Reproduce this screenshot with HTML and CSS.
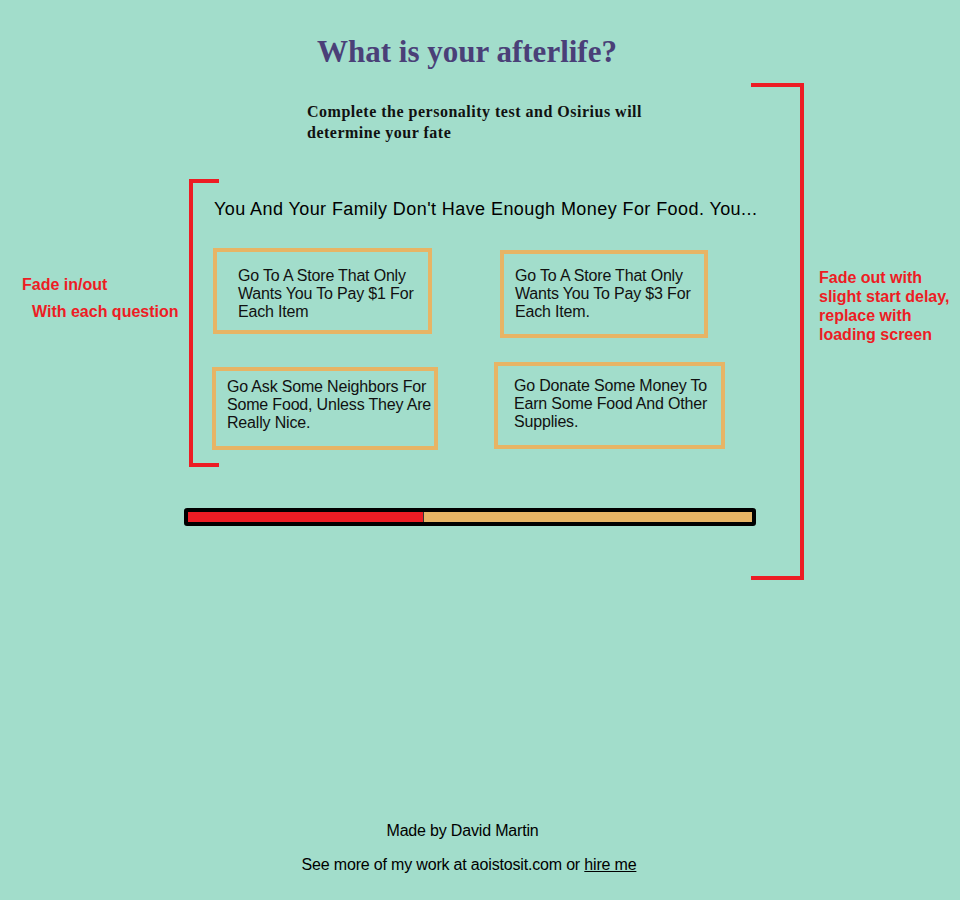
FILE: index.html
```html
<!DOCTYPE html>
<html lang="en">
<head>
<meta charset="utf-8">
<title>What is your afterlife?</title>
<link rel="stylesheet" href="styles.css">
</head>
<body>
<div class="page">
  <h1 class="title">What is your afterlife?</h1>
  <p class="subtitle">Complete the personality test and Osirius will determine your fate</p>

  <section class="quiz">
    <h2 class="question">You And Your Family Don't Have Enough Money For Food. You...</h2>
    <div class="answers">
      <div class="answer answer-1">Go To A Store That Only<br>Wants You To Pay $1 For<br>Each Item</div>
      <div class="answer answer-2">Go To A Store That Only<br>Wants You To Pay $3 For<br>Each Item.</div>
      <div class="answer answer-3">Go Ask Some Neighbors For<br>Some Food, Unless They Are<br>Really Nice.</div>
      <div class="answer answer-4">Go Donate Some Money To<br>Earn Some Food And Other<br>Supplies.</div>
    </div>
  </section>

  <div class="progress">
    <div class="progress-track">
      <div class="progress-fill" style="width: 41.7%"></div>
    </div>
  </div>

  <footer class="footer">
    <p class="credit">Made by David Martin</p>
    <p class="more">See more of my work at aoistosit.com or <a href="#" class="hire">hire me</a></p>
  </footer>

  <div class="bracket bracket-left"></div>
  <div class="bracket bracket-right"></div>
  <div class="note note-left">
    <span class="note-line">Fade in/out</span>
    <span class="note-line note-indent">With each question</span>
  </div>
  <div class="note note-right">Fade out with slight start delay, replace with loading screen</div>
</div>
</body>
</html>
```
FILE: styles.css
```css
html, body {
  margin: 0;
  padding: 0;
  background: #a2ddcb;
}

.page {
  position: relative;
  width: 960px;
  height: 900px;
  padding-top: 34px;
  box-sizing: border-box;
  font-family: "Liberation Sans", Arial, sans-serif;
  color: #000;
}

.title {
  margin: 0;
  width: 934px;
  text-align: center;
  font-family: "Liberation Serif", "Times New Roman", serif;
  font-weight: bold;
  font-size: 31px;
  line-height: 36px;
  color: #4a4078;
}

.subtitle {
  margin: 31px 0 0 307px;
  width: 360px;
  font-family: "Liberation Serif", "Times New Roman", serif;
  font-weight: bold;
  font-size: 16px;
  letter-spacing: 0.5px;
  line-height: 21px;
  color: #111;
}

.quiz {
  margin: 55px 0 0 212px;
}

.question {
  margin: 0 0 0 2px;
  font-weight: normal;
  font-size: 18px;
  letter-spacing: 0.42px;
  line-height: 22px;
  white-space: nowrap;
}

.answers {
  margin-top: 28px;
  display: grid;
  grid-template-columns: 282px 240px;
  row-gap: 24px;
  align-items: start;
}

.answer {
  box-sizing: border-box;
  border: 4px solid #e7b465;
  font-size: 16px;
  letter-spacing: -0.18px;
  line-height: 18px;
  white-space: nowrap;
  color: #111;
}

.answer-1 {
  margin-left: 1px;
  width: 219px;
  height: 86px;
  padding: 15px 0 0 21px;
}

.answer-2 {
  margin: 2px 0 0 6px;
  width: 208px;
  height: 88px;
  padding: 13px 0 0 11px;
}

.answer-3 {
  margin-top: 5px;
  width: 226px;
  height: 83px;
  padding: 7px 0 0 11px;
}

.answer-4 {
  width: 231px;
  height: 87px;
  padding: 11px 0 0 16px;
}

.progress {
  margin: 58px 0 0 184px;
  width: 572px;
}

.progress-track {
  background: #e7b465;
  border: 4px solid #000;
  border-radius: 3px;
  height: 10px;
}

.progress-fill {
  height: 100%;
  background: #ed1c24;
  border-right: 1px solid #333;
}

.footer {
  margin-top: 296px;
  width: 932px;
  text-align: center;
  font-size: 16px;
  letter-spacing: -0.18px;
  line-height: 18px;
}

.footer p {
  margin: 0;
}

.credit {
  padding-right: 7px;
}

.more {
  margin-top: 16px !important;
  padding-left: 6px;
}

.hire {
  color: #000;
  text-decoration: underline;
}

.bracket {
  position: absolute;
  box-sizing: border-box;
  border: 4px solid #ed1c24;
}

.bracket-left {
  left: 189px;
  top: 179px;
  width: 30px;
  height: 288px;
  border-right: none;
}

.bracket-right {
  left: 751px;
  top: 83px;
  width: 53px;
  height: 497px;
  border-left: none;
}

.note {
  position: absolute;
  color: #ed1c24;
  font-weight: bold;
  font-size: 16px;
}

.note-left {
  left: 22px;
  top: 271px;
  line-height: 27px;
}

.note-line {
  display: block;
}

.note-indent {
  padding-left: 10px;
}

.note-right {
  left: 819px;
  top: 268px;
  width: 140px;
  line-height: 19px;
}
```
